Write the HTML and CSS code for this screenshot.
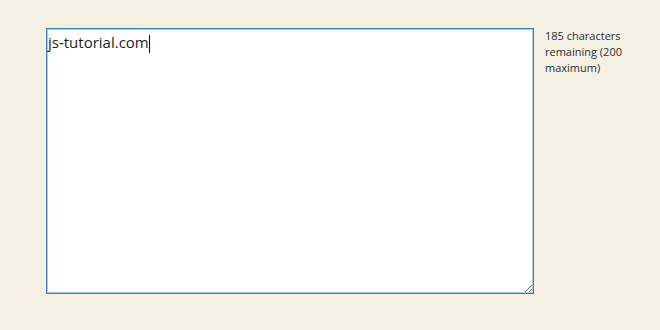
FILE: index.html
```html
<!DOCTYPE html>
<html lang="en">
<head>
    <meta charset="UTF-8" />
    <title>Character counter</title>
    <link rel="stylesheet" href="styles.css">
</head>
<body>

    <div class="wrap">
        <div class="field">
            <textarea id="message" maxlength="200" autofocus>js-tutorial.com</textarea>
            <span class="caret"></span>
        </div>
        <div class="counter" id="counter">185 characters remaining (200 maximum)</div>
    </div>

    <script>
        const box = document.getElementById('message');
        box.focus();
        box.setSelectionRange(box.value.length, box.value.length);
    </script>
</body>
</html>
```

FILE: styles.css
```css
* {
    margin: 0;
    padding: 0;
    box-sizing: border-box;
}

body {
    background: #f4f1e4;
    font-family: "Open Sans", "DejaVu Sans", sans-serif;
}

.wrap {
    display: flex;
    align-items: flex-start;
    gap: 11px;
    padding: 28px 0 0 46px;
}

.field {
    position: relative;
}

textarea {
    display: block;
    width: 488px;
    height: 266px;
    border: 1px solid #3b80ba;
    box-shadow: inset 0 0 0 1px #a8cbe8;
    background: #fff;
    padding: 3px 1px;
    font-family: "Open Sans", "DejaVu Sans", sans-serif;
    font-size: 15px;
    line-height: 20px;
    color: #1e1e1e;
    caret-color: transparent;
    outline: none;
    resize: both;
}

/* fake caret right after the text */
.caret {
    position: absolute;
    left: 103px;
    top: 7px;
    width: 1px;
    height: 18px;
    background: #000;
}

.counter {
    width: 80px;
    font-size: 11px;
    line-height: 16px;
    color: #2d2d2d;
}
```
